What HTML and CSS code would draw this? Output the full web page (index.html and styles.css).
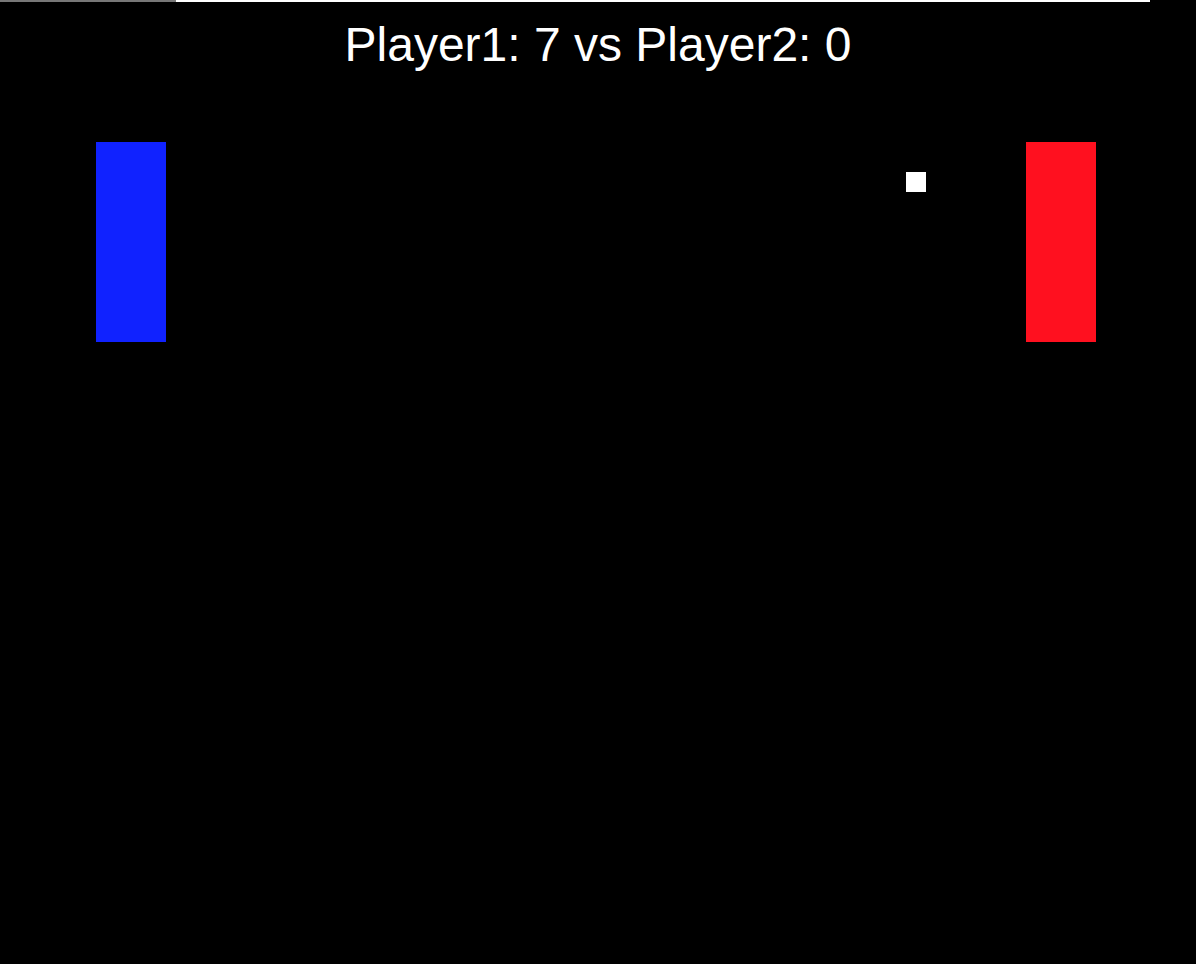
FILE: index.html
```html
<!DOCTYPE html>
<html lang="en">
<head>
  <meta charset="UTF-8">
  <meta name="viewport" content="width=device-width, initial-scale=1.0">
  <title>Pong</title>
  <link rel="stylesheet" href="styles.css">
</head>
<body>

  <!-- barra fina no topo -->
  <div class="topbar">
    <span class="topbar-grey"></span>
    <span class="topbar-white"></span>
  </div>

  <!-- Campo de jogo -->
  <main class="court">
    <h1 class="score">Player1: 7 vs Player2: 0</h1>
    <div class="paddle paddle-left"></div>
    <div class="paddle paddle-right"></div>
    <div class="ball"></div>
  </main>

</body>
</html>
```

FILE: styles.css
```css
html, body {
  margin: 0;
  padding: 0;
  background-color: #000;
  font-family: "Liberation Sans", Arial, sans-serif;
}

.topbar {
  display: flex;
  height: 2px;
}

.topbar-grey {
  width: 176px;
  background-color: #777;
}

.topbar-white {
  width: 974px;
  background-color: #fff;
}

.court {
  position: relative;
  height: 962px;
  overflow: hidden;
}

.score {
  margin: 0;
  padding-top: 19px;
  font-size: 48px;
  line-height: 48px;
  font-weight: normal;
  color: #fff;
  text-align: center;
}

.paddle {
  position: absolute;
  top: 140px;
  width: 70px;
  height: 200px;
}

.paddle-left {
  left: 96px;
  background-color: #1022ff;
}

.paddle-right {
  left: 1026px;
  background-color: #ff101f;
}

.ball {
  position: absolute;
  left: 906px;
  top: 170px;
  width: 20px;
  height: 20px;
  background-color: #fff;
}
```
